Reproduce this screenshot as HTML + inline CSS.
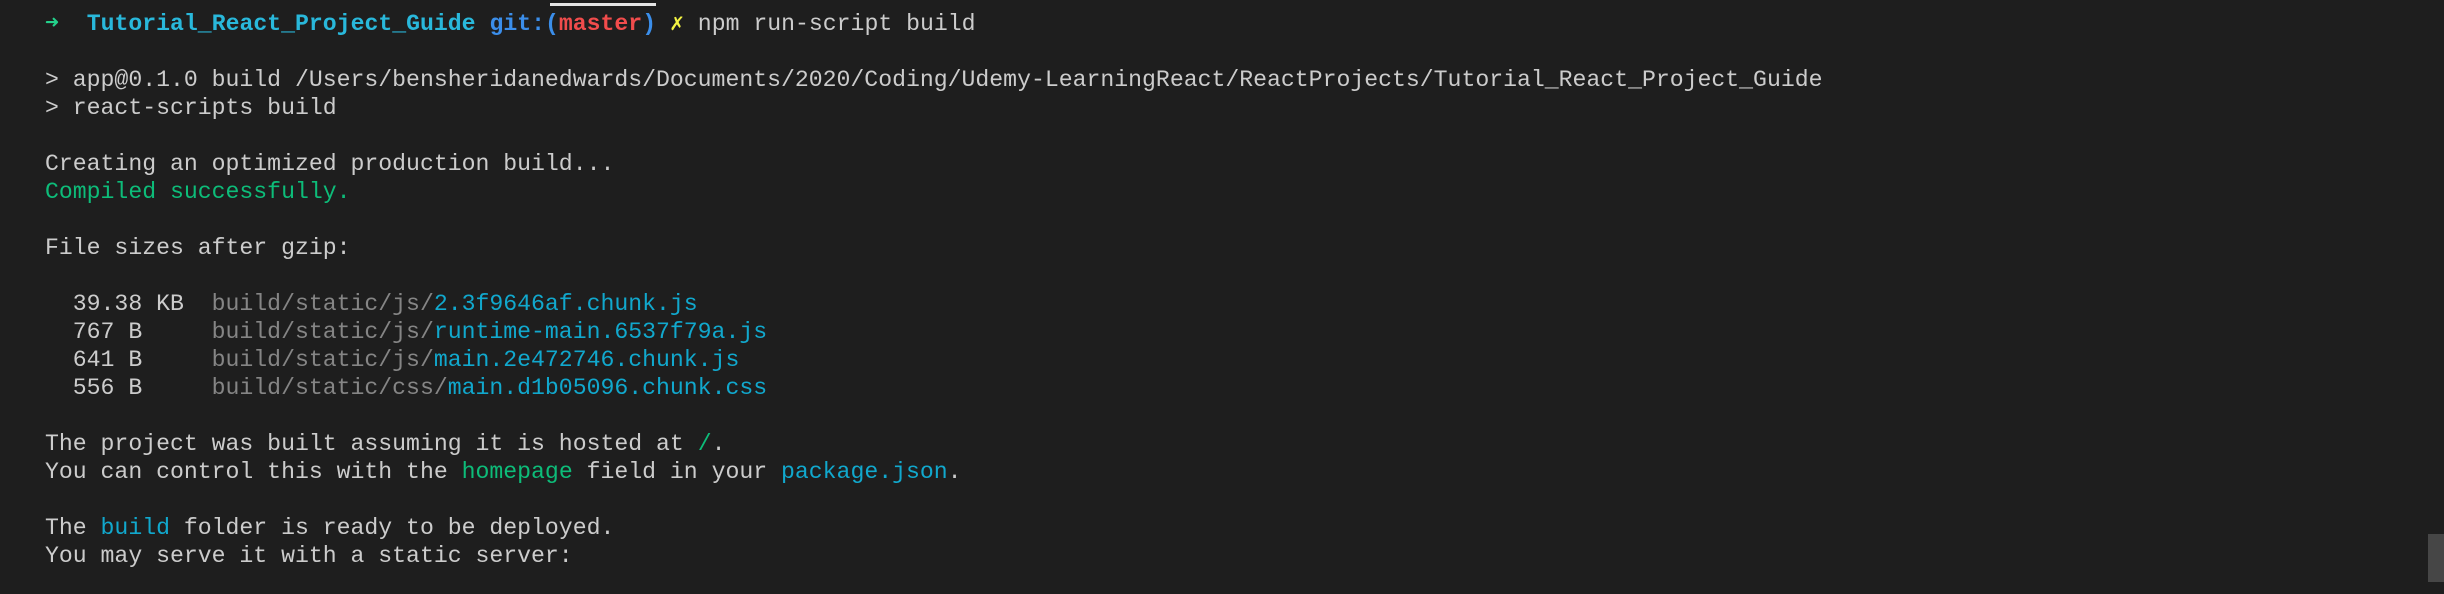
<!DOCTYPE html>
<html><head><meta charset="utf-8"><style>
html,body{margin:0;padding:0;background:#1e1e1e;width:2444px;height:594px;overflow:hidden}
pre{margin:0;position:absolute;left:45px;top:10px;font-family:"Liberation Mono","DejaVu Sans Mono",monospace;font-size:23.15px;line-height:28px;color:#cccccc;white-space:pre}
.g{color:#23d18b}.c{color:#29b8db;font-weight:bold}.b{color:#3b8eea;font-weight:bold}.r{color:#f14c4c;font-weight:bold}.y{color:#f5f543}
.gr{color:#858585}.cy{color:#11a8cd}.gn{color:#0dbc79}
.bar{position:absolute;left:550px;top:3px;width:106px;height:3px;background:#e5e5e5}
.sb{position:absolute;left:2428px;top:534px;width:16px;height:48px;background:#464646}
</style></head><body>
<div class="bar"></div><div class="sb"></div>
<pre><span class="g">➜</span>  <span class="c">Tutorial_React_Project_Guide</span> <span class="b">git:(</span><span class="r">master</span><span class="b">)</span> <span class="y">✗</span> npm run-script build

&gt; app@0.1.0 build /Users/bensheridanedwards/Documents/2020/Coding/Udemy-LearningReact/ReactProjects/Tutorial_React_Project_Guide
&gt; react-scripts build

Creating an optimized production build...
<span class="gn">Compiled successfully.</span>

File sizes after gzip:

  39.38 KB  <span class="gr">build/static/js/</span><span class="cy">2.3f9646af.chunk.js</span>
  767 B     <span class="gr">build/static/js/</span><span class="cy">runtime-main.6537f79a.js</span>
  641 B     <span class="gr">build/static/js/</span><span class="cy">main.2e472746.chunk.js</span>
  556 B     <span class="gr">build/static/css/</span><span class="cy">main.d1b05096.chunk.css</span>

The project was built assuming it is hosted at <span class="gn">/</span>.
You can control this with the <span class="gn">homepage</span> field in your <span class="cy">package.json</span>.

The <span class="cy">build</span> folder is ready to be deployed.
You may serve it with a static server:</pre>
</body></html>
